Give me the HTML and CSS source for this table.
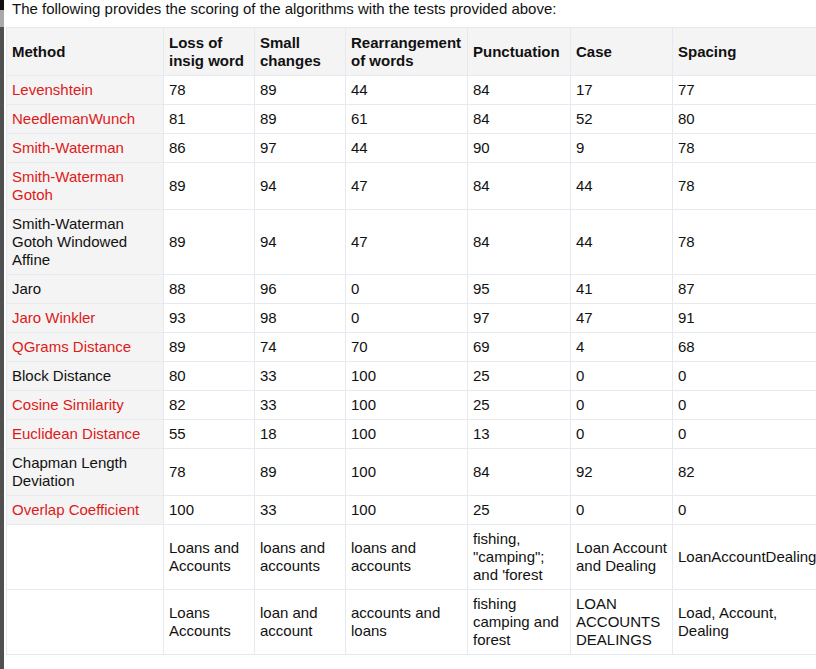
FILE: index.html
```html
<!DOCTYPE html>
<html>
<head>
<meta charset="utf-8">
<link rel="stylesheet" href="styles.css">
</head>
<body>
<div class="page">
  <div class="strip">
    <div class="strip-top"></div>
    <div class="strip-mid"></div>
    <div class="strip-rest"></div>
  </div>
  <div class="content">
    <p class="intro">The following provides the scoring of the algorithms with the tests provided above:</p>
    <table class="scores">
      <colgroup>
        <col class="c-method"><col class="c-loss"><col class="c-small"><col class="c-rear"><col class="c-punc"><col class="c-case"><col class="c-space">
      </colgroup>
      <thead>
        <tr><th>Method</th><th>Loss of insig word</th><th>Small changes</th><th>Rearrangement of words</th><th>Punctuation</th><th>Case</th><th>Spacing</th></tr>
      </thead>
      <tbody>
        <tr><td class="m link">Levenshtein</td><td>78</td><td>89</td><td>44</td><td>84</td><td>17</td><td>77</td></tr>
        <tr><td class="m link">NeedlemanWunch</td><td>81</td><td>89</td><td>61</td><td>84</td><td>52</td><td>80</td></tr>
        <tr><td class="m link">Smith-Waterman</td><td>86</td><td>97</td><td>44</td><td>90</td><td>9</td><td>78</td></tr>
        <tr><td class="m link">Smith-Waterman Gotoh</td><td>89</td><td>94</td><td>47</td><td>84</td><td>44</td><td>78</td></tr>
        <tr><td class="m">Smith-Waterman Gotoh Windowed Affine</td><td>89</td><td>94</td><td>47</td><td>84</td><td>44</td><td>78</td></tr>
        <tr><td class="m">Jaro</td><td>88</td><td>96</td><td>0</td><td>95</td><td>41</td><td>87</td></tr>
        <tr><td class="m link">Jaro Winkler</td><td>93</td><td>98</td><td>0</td><td>97</td><td>47</td><td>91</td></tr>
        <tr><td class="m link">QGrams Distance</td><td>89</td><td>74</td><td>70</td><td>69</td><td>4</td><td>68</td></tr>
        <tr><td class="m">Block Distance</td><td>80</td><td>33</td><td>100</td><td>25</td><td>0</td><td>0</td></tr>
        <tr><td class="m link">Cosine Similarity</td><td>82</td><td>33</td><td>100</td><td>25</td><td>0</td><td>0</td></tr>
        <tr><td class="m link">Euclidean Distance</td><td>55</td><td>18</td><td>100</td><td>13</td><td>0</td><td>0</td></tr>
        <tr><td class="m">Chapman Length Deviation</td><td>78</td><td>89</td><td>100</td><td>84</td><td>92</td><td>82</td></tr>
        <tr><td class="m link">Overlap Coefficient</td><td>100</td><td>33</td><td>100</td><td>25</td><td>0</td><td>0</td></tr>
        <tr><td class="blank"></td><td>Loans and Accounts</td><td>loans and accounts</td><td>loans and accounts</td><td>fishing, "camping"; and 'forest</td><td>Loan Account and Dealing</td><td>LoanAccountDealing</td></tr>
        <tr><td class="blank"></td><td>Loans Accounts</td><td>loan and account</td><td>accounts and loans</td><td>fishing camping and forest</td><td>LOAN ACCOUNTS DEALINGS</td><td>Load, Account, Dealing</td></tr>
      </tbody>
    </table>
  </div>
</div>
</body>
</html>
```
FILE: styles.css
```css
html, body {
  margin: 0;
  padding: 0;
  overflow: hidden;
  background: #ffffff;
}
body {
  font-family: "Liberation Sans", Arial, sans-serif;
  font-size: 15px;
  line-height: 18px;
  color: #111111;
}
.page {
  display: flex;
  min-height: 669px;
  width: 830px;
}
.strip {
  width: 4px;
  flex: 0 0 4px;
  display: flex;
  flex-direction: column;
}
.strip-top { height: 10px; background: #111111; }
.strip-mid { height: 17px; background: #a9a9a9; }
.strip-rest { flex: 1; background: #505050; }
.content {
  padding-left: 2px;
  flex: 1;
}
.intro {
  margin: 0;
  padding-left: 6px;
  height: 18px;
}
.scores {
  border-collapse: collapse;
  table-layout: fixed;
  width: 816px;
  margin-top: 9px;
}
.c-method { width: 157px; }
.c-loss { width: 91px; }
.c-small { width: 91px; }
.c-rear { width: 122px; }
.c-punc { width: 103px; }
.c-case { width: 102px; }
.c-space { width: 150px; }
.scores th, .scores td {
  border: 1px solid #e6e9ef;
  padding: 5px 5px;
  text-align: left;
  vertical-align: middle;
  white-space: normal;
}
.scores th {
  background: #f4f4f4;
  font-weight: bold;
  padding-top: 6px;
}
.scores td.m {
  background: #f4f4f4;
}
.scores td.blank {
  background: #ffffff;
}
.scores td.link {
  color: #dd1a1a;
}
```
